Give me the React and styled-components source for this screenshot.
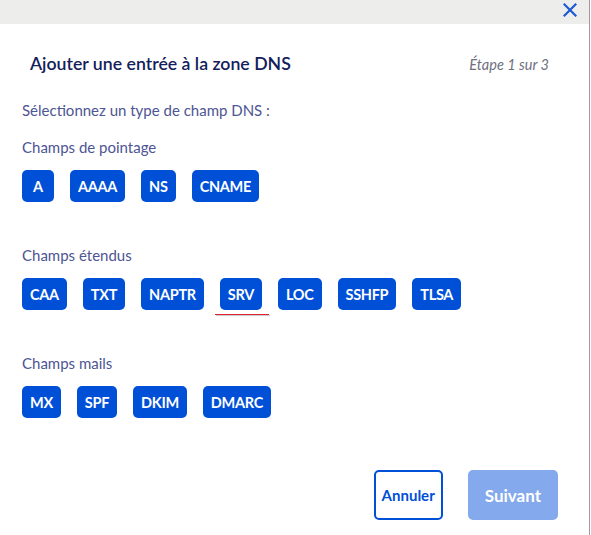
import React from 'react';
import styled, { createGlobalStyle } from 'styled-components';

const GlobalStyle = createGlobalStyle`
    html, body {
        margin: 0;
        padding: 0;
        background: #ffffff;
    }
    body {
        font-family: Lato, "Open Sans", sans-serif;
    }
`;

const Modal = styled.div`
    position: relative;
    width: 589px;
    height: 535px;
    border-right: 1px solid #9b9ba8;
    background: #ffffff;
    overflow: hidden;
`;

const ScrollMark = styled.div`
    position: absolute;
    right: -1px;
    top: 147px;
    width: 1px;
    height: 11px;
    background: #1f4fb0;
`;

const TopBar = styled.div`
    height: 24px;
    background: #edeeec;
    display: flex;
    justify-content: flex-end;
    align-items: center;
    padding-right: 12px;
`;

const CloseButton = styled.button`
    border: none;
    background: transparent;
    padding: 0;
    width: 14px;
    height: 14px;
    display: flex;
    cursor: pointer;
    margin-top: -4px;

    svg {
        width: 14px;
        height: 14px;
        stroke: #1d5ad6;
        stroke-width: 2.2;
    }
`;

const Body = styled.div`
    padding: 0 22px;
`;

const TitleRow = styled.div`
    margin-top: 26px;
    height: 28px;
    display: flex;
    align-items: center;
    justify-content: space-between;
    padding: 0 18px 0 8px;
`;

const Title = styled.h2`
    margin: 0;
    font-size: 17.7px;
    font-weight: 600;
    line-height: 28px;
    color: #13205a;
`;

const Step = styled.span`
    font-size: 14.5px;
    font-style: italic;
    color: #6f7080;
`;

const Prompt = styled.p`
    margin: 22px 0 0;
    font-size: 15px;
    line-height: 20px;
    color: #4d5592;
`;

const SectionLabel = styled.div`
    margin-top: ${props => props.first ? 17 : 43}px;
    font-size: 15px;
    line-height: 20px;
    color: #4d5592;
`;

const TypeRow = styled.div`
    margin-top: 13px;
    display: flex;
    gap: 16px;
`;

const TypeButton = styled.button`
    position: relative;
    height: 32px;
    min-width: 32px;
    padding: 0 8px;
    border: none;
    border-radius: 5px;
    background: #0050d7;
    color: #ffffff;
    font-family: Lato, "Open Sans", sans-serif;
    font-size: 14.5px;
    letter-spacing: -0.3px;
    font-weight: 700;
    cursor: pointer;

    ${props => props.marked && `
        &:after {
            content: "";
            position: absolute;
            left: -5px;
            right: -7px;
            bottom: -5px;
            height: 1px;
            background: #e0242f;
            box-shadow: 1px 1px 1px rgba(0, 0, 0, 0.25);
        }
    `}
`;

const Footer = styled.div`
    margin-top: 52px;
    display: flex;
    justify-content: flex-end;
    gap: 25px;
    padding-right: 9px;
`;

const ActionButton = styled.button`
    height: 50px;
    padding: 0 ${props => props.primary ? 15 : 6}px;
    border-radius: 5px;
    border: 2px solid ${props => props.primary ? '#84a9ec' : '#0050d7'};
    background: ${props => props.primary ? '#84a9ec' : '#ffffff'};
    color: ${props => props.primary ? '#ffffff' : '#0050d7'};
    font-family: Lato, "Open Sans", sans-serif;
    font-size: ${props => props.primary ? 17 : 15}px;
    font-weight: 700;
    cursor: ${props => props.primary ? 'default' : 'pointer'};
`;

const sections = [
    { label: 'Champs de pointage', types: ['A', 'AAAA', 'NS', 'CNAME'] },
    { label: 'Champs étendus', types: ['CAA', 'TXT', 'NAPTR', 'SRV', 'LOC', 'SSHFP', 'TLSA'] },
    { label: 'Champs mails', types: ['MX', 'SPF', 'DKIM', 'DMARC'] },
];

export default function App() {
    return (
        <>
            <GlobalStyle />
            <Modal>
                <ScrollMark />
                <TopBar>
                    <CloseButton aria-label="Fermer">
                        <svg viewBox="0 0 14 14" fill="none">
                            <path d="M1.5 1.5l11 11M12.5 1.5l-11 11" strokeLinecap="square" />
                        </svg>
                    </CloseButton>
                </TopBar>
                <Body>
                    <TitleRow>
                        <Title>Ajouter une entrée à la zone DNS</Title>
                        <Step>Étape 1 sur 3</Step>
                    </TitleRow>
                    <Prompt>Sélectionnez un type de champ DNS :</Prompt>
                    {sections.map((section, i) => (
                        <React.Fragment key={section.label}>
                            <SectionLabel first={i === 0}>{section.label}</SectionLabel>
                            <TypeRow>
                                {section.types.map(t => (
                                    <TypeButton key={t} marked={t === 'SRV'}>{t}</TypeButton>
                                ))}
                            </TypeRow>
                        </React.Fragment>
                    ))}
                    <Footer>
                        <ActionButton>Annuler</ActionButton>
                        <ActionButton primary>Suivant</ActionButton>
                    </Footer>
                </Body>
            </Modal>
        </>
    );
}
